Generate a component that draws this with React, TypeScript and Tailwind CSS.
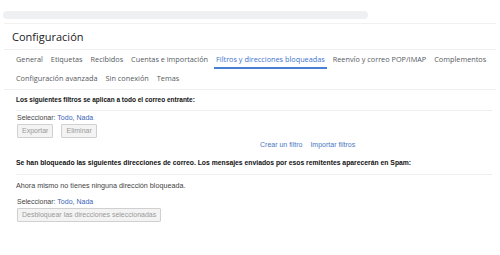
const tabsTop = [
  "General",
  "Etiquetas",
  "Recibidos",
  "Cuentas e importación",
  "Filtros y direcciones bloqueadas",
  "Reenvío y correo POP/IMAP",
  "Complementos",
];
const tabsBottom = ["Configuración avanzada", "Sin conexión", "Temas"];
const ACTIVE = "Filtros y direcciones bloqueadas";

function Tab({ label }: { label: string }) {
  const active = label === ACTIVE;
  return (
    <div
      className={
        active
          ? "-mx-[2px] flex h-full items-center border-b-2 border-[#4a7fd6] px-[2px] text-[#3b73cf]"
          : "flex h-full items-center border-b-2 border-transparent text-[#555a60]"
      }
    >
      {label}
    </div>
  );
}

function Select() {
  return (
    <div className="text-[#444]">
      Seleccionar: <span className="text-[#3a64b8]">Todo</span>,{" "}
      <span className="text-[#3a64b8]">Nada</span>
    </div>
  );
}

function Btn({ children }: { children: React.ReactNode }) {
  return (
    <div className="flex h-[14px] items-center rounded-[1px] border border-[#d0d0d0] bg-[#f3f3f3] px-[4px] text-[#9a9a9a]">
      {children}
    </div>
  );
}

export default function App() {
  return (
    <div className="h-[255px] w-[500px] overflow-hidden bg-white font-['Liberation_Sans',Arial,sans-serif] text-[7px] leading-[8px] text-[#222]">
      <div className="h-[23px] pl-[3px] pt-[11px]">
        <div className="h-[8px] w-[365px] rounded-full bg-[#eff0f2]" />
      </div>

      <div className="mx-[4px] flex h-[26px] items-center border-t border-[#f1f1f1] pl-[8px] font-['Open_Sans',sans-serif] text-[11px] leading-[14px] text-[#202124]">
        Configuración
      </div>

      <div className="mx-[4px] border-y border-[#efefef] pl-[12px] font-['Open_Sans',sans-serif] text-[7.3px]">
        <div className="flex h-[19px] gap-[8px]">
          {tabsTop.map((t) => (
            <Tab key={t} label={t} />
          ))}
        </div>
        <div className="flex h-[20px] gap-[8px]">
          {tabsBottom.map((t) => (
            <Tab key={t} label={t} />
          ))}
        </div>
      </div>

      <div className="mx-[16px] mr-[8px] flex h-[21px] items-center border-b border-[#eeeeee] text-[6.5px] font-bold text-[#111]">
        Los siguientes filtros se aplican a todo el correo entrante:
      </div>

      <div className="pl-[17px] pt-[3px]">
        <Select />
        <div className="mt-[2px] flex gap-[8px]">
          <Btn>Exportar</Btn>
          <Btn>Eliminar</Btn>
        </div>
      </div>

      <div className="mt-[3px] flex gap-[8px] pl-[260px] text-[#4a77c4]">
        <span>Crear un filtro</span>
        <span>Importar filtros</span>
      </div>

      <div className="mx-[16px] mr-[8px] flex h-[26px] items-center border-b border-[#eeeeee] pt-[2px] text-[6.8px] font-bold text-[#111]">
        Se han bloqueado las siguientes direcciones de correo. Los mensajes enviados por esos remitentes aparecerán en Spam:
      </div>

      <div className="pl-[16px] pt-[7px] text-[7.2px] text-[#444]">
        Ahora mismo no tienes ninguna dirección bloqueada.
      </div>

      <div className="pl-[17px] pt-[8px]">
        <Select />
        <div className="mt-[2px] flex">
          <Btn>Desbloquear las direcciones seleccionadas</Btn>
        </div>
      </div>
    </div>
  );
}
